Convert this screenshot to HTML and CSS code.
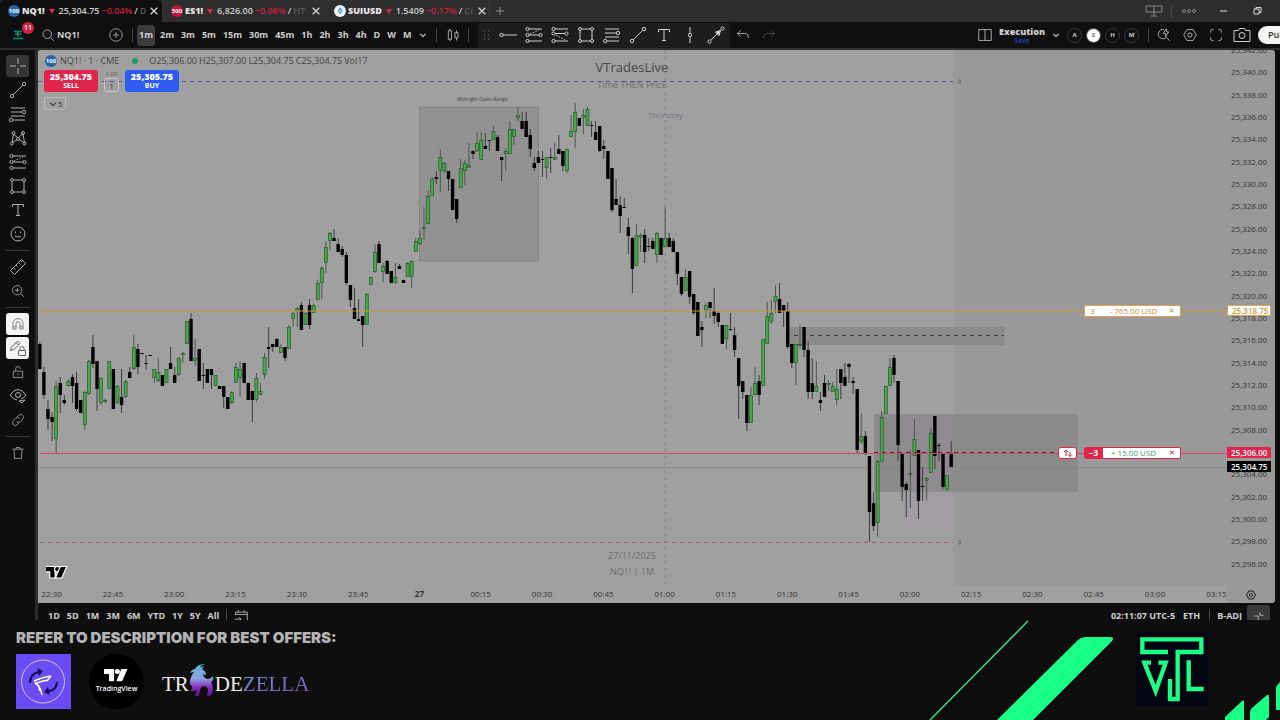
FILE: index.html
```html
<!DOCTYPE html>
<html lang="en">

<head>
	<meta charset="utf-8">
	<title>NQ1! 25,304.75</title>
	<link rel="stylesheet" href="styles.css">
</head>

<body>
	<!-- icon sprites -->
	<svg class="sprites" aria-hidden="true">
		<symbol id="i-cross" viewBox="0 0 18 18"><path d="M9 1v6M9 11v6M1 9h6M11 9h6" /></symbol>
		<symbol id="i-line" viewBox="0 0 18 18"><circle cx="3" cy="15" r="1.7" /><circle cx="15" cy="3" r="1.7" /><path d="M4.3 13.7l9.4-9.4" /></symbol>
		<symbol id="i-fib" viewBox="0 0 18 18"><path d="M2 3h14M2 7h11M2 11h14M4 15h12" /><circle cx="15" cy="7" r="1.7" /><circle cx="2.2" cy="15" r="1.7" /></symbol>
		<symbol id="i-pattern" viewBox="0 0 18 18"><path d="M3 14l1.500-9L9 9l5-4.500L15.500 14 10 10.500M3 14l5-3.500" /><circle cx="2.800" cy="14.500" r="1.500" /><circle cx="4.500" cy="4" r="1.500" /><circle cx="9" cy="10" r="1.500" /><circle cx="14" cy="4" r="1.500" /><circle cx="15.500" cy="14.500" r="1.500" /></symbol>
		<symbol id="i-forecast" viewBox="0 0 18 18"><path d="M4 3h13M4 9h10M4 15h13" /><path d="M5 8l9-4" stroke-dasharray="1.500 1.500" /><circle cx="2.500" cy="3" r="1.600" /><circle cx="2.500" cy="9" r="1.600" /><circle cx="2.500" cy="15" r="1.600" /><circle cx="15.500" cy="9" r="1.600" /></symbol>
		<symbol id="i-short" viewBox="0 0 18 18"><path d="M4 3h13M4 7.500h10M4 15h13" /><path d="M5 9l9 5" stroke-dasharray="1.500 1.500" /><circle cx="2.500" cy="3" r="1.600" /><circle cx="2.500" cy="7.500" r="1.600" /><circle cx="2.500" cy="15" r="1.600" /><circle cx="15.500" cy="7.500" r="1.600" /></symbol>
		<symbol id="i-rect" viewBox="0 0 18 18"><path d="M4.500 3h9M4.500 15h9M3 4.500v9M15 4.500v9" /><circle cx="3" cy="3" r="1.500" /><circle cx="15" cy="3" r="1.500" /><circle cx="3" cy="15" r="1.500" /><circle cx="15" cy="15" r="1.500" /></symbol>
		<symbol id="i-text" viewBox="0 0 18 18"><path d="M3.500 6V3.500h11V6M9 3.500v11M7 14.500h4" /></symbol>
		<symbol id="i-smile" viewBox="0 0 18 18"><circle cx="9" cy="9" r="7" /><path d="M6.500 6.500v1.500M11.500 6.500v1.500M6 11q3 2.500 6 0" /></symbol>
		<symbol id="i-ruler" viewBox="0 0 18 18"><path d="M1.500 12.500l11-11 4 4-11 11zM4.500 9.500l2 2M7 7l1.500 1.500M9.500 4.500l2 2M12 3l1 1" /></symbol>
		<symbol id="i-zoomin" viewBox="0 0 18 18"><circle cx="8" cy="8" r="6" /><path d="M12.500 12.500l4 4M5 8h6M8 5v6" /></symbol>
		<symbol id="i-magnet" viewBox="0 0 18 18"><path d="M2.500 15.500V8.500a6.500 6.500 0 0 1 13 0v7h-4v-7a2.500 2.500 0 0 0-5 0v7zM2.500 12.500h4M11.500 12.500h4" /></symbol>
		<symbol id="i-pencil" viewBox="0 0 18 18"><path d="M1.500 11.500l1-3.500 6-6 2.500 2.500-6 6zM7 3.500l2.500 2.500M9.500 11.500h7v5h-7zM11 11.500V9.500a2 2 0 0 1 4 0v2" /></symbol>
		<symbol id="i-lock" viewBox="0 0 18 18"><path d="M3 8h12v8H3zM6 8V5a3 3 0 0 1 6 0M9 11v2" /></symbol>
		<symbol id="i-eye" viewBox="0 0 18 18"><path d="M1 8q8-11 16 0-2 3-5 4M1 8q3 4.500 7 5M10 14l6-1-3 3z" /><circle cx="9" cy="8" r="2.500" /></symbol>
		<symbol id="i-link" viewBox="0 0 18 18"><path d="M7.500 5.500L10 3a3.500 3.500 0 0 1 5 5l-3 3a3.500 3.500 0 0 1-5 0M10.500 12.500L8 15a3.500 3.500 0 0 1-5-5l3-3a3.500 3.500 0 0 1 5 0" /></symbol>
		<symbol id="i-trash" viewBox="0 0 18 18"><path d="M2 4h14M6.500 4V2h5v2M4 4l.5 12h9L14 4" /></symbol>
		<symbol id="i-hray" viewBox="0 0 18 18"><path d="M4 9h14" /><circle cx="2.500" cy="9" r="1.700" /></symbol>
		<symbol id="i-vline" viewBox="0 0 18 18"><path d="M9 1v6M9 11v6" /><circle cx="9" cy="9" r="1.700" /></symbol>
		<symbol id="i-arrow" viewBox="0 0 18 18"><circle cx="2.500" cy="15.500" r="1.600" /><circle cx="15.500" cy="2.500" r="1.600" /><path d="M4 14l10-10" /><path d="M13.500 4.500l-1.500 5-3.500-3.500z" fill="currentColor" /></symbol>
		<symbol id="i-search" viewBox="0 0 18 18"><circle cx="8" cy="8" r="5.500" /><path d="M12 12l4.500 4.500" /></symbol>
		<symbol id="i-plus" viewBox="0 0 18 18"><circle cx="9" cy="9" r="8" /><path d="M9 5v8M5 9h8" /></symbol>
		<symbol id="i-chev" viewBox="0 0 18 18"><path d="M4 7l5 4.500L14 7" /></symbol>
		<symbol id="i-candles" viewBox="0 0 18 18"><path d="M3 3.500h4v11H3zM5 1v2.500M5 14.500V17M11.500 6h4v6.500h-4zM13.500 3v3M13.500 12.500V16" /></symbol>
		<symbol id="i-undo" viewBox="0 0 18 18"><path d="M6 3L2 7l4 4M2 7h9q5 0 5 6" /></symbol>
		<symbol id="i-redo" viewBox="0 0 18 18"><path d="M12 3l4 4-4 4M16 7H7q-5 0-5 6" /></symbol>
		<symbol id="i-layout" viewBox="0 0 18 18"><path d="M1 2h16v14H1zM9 2v14" /></symbol>
		<symbol id="i-replay" viewBox="0 0 18 18"><path d="M13 11A6 6 0 1 1 9 2M12.500 12.500l4 4M12 1L8 7h3v4l4-6h-3z" /></symbol>
		<symbol id="i-gear" viewBox="0 0 18 18"><path d="M5 2h8l4 7-4 7H5L1 9z" /><circle cx="9" cy="9" r="2.800" /></symbol>
		<symbol id="i-full" viewBox="0 0 18 18"><path d="M2 6V4q0-2 2-2h2M12 2h2q2 0 2 2v2M16 12v2q0 2-2 2h-2M6 16H4q-2 0-2-2v-2" /></symbol>
		<symbol id="i-camera" viewBox="0 0 18 18"><path d="M1 4.500h4.500l1-2h5l1 2H17v11H1z" /><circle cx="9" cy="9.500" r="3" /></symbol>
		<symbol id="i-x" viewBox="0 0 18 18"><path d="M4 4l10 10M14 4L4 14" /></symbol>
		<symbol id="i-calendar" viewBox="0 0 18 18"><path d="M2 8V4h15v12h-4M2 7h15M5.500 4V1.500M13 4V1.500M1 13h8M6.500 10.500L9 13l-2.500 2.500" /></symbol>
		<!-- TradingView mark -->
		<symbol id="tv-mark" viewBox="0 0 36 20"><path d="M0 1h14v17H7V8H0z" /><circle cx="18.500" cy="4.500" r="3.500" /><path d="M24 1h8.500L25 18h-8z" /></symbol>
	</svg>

	<nav class="tabs">
		<div class="tab active">
			<span class="coin blue">100</span><b>NQ1!</b><i class="down"></i><span>25,304.75</span><span class="red">−0.04%</span><span>/</span><span class="faint">D</span>
			<button class="close" aria-label="Close NQ1!"><svg><use href="#i-x" /></svg></button>
		</div>
		<div class="tab">
			<span class="coin crimson">500</span><b>ES1!</b><i class="down"></i><span>6,826.00</span><span class="red">−0.06%</span><span>/</span><span class="faint">HT</span>
			<button class="close" aria-label="Close ES1!"><svg><use href="#i-x" /></svg></button>
		</div>
		<div class="tab">
			<span class="coin white">◊</span><b>SUIUSD</b><i class="down"></i><span>1.5409</span><span class="red">−0.17%</span><span>/</span><span class="faint">Cr</span>
			<button class="close" aria-label="Close SUIUSD"><svg><use href="#i-x" /></svg></button>
		</div>
		<button class="new-tab" aria-label="New tab"><svg viewBox="0 0 10 10"><path d="M5 1v8M1 5h8" /></svg></button>
		<div class="window-buttons">
			<button aria-label="Pin"><svg viewBox="0 0 18 12"><path d="M1 1h16v6H1zM9 1v10M6 11h6" /></svg></button>
			<span class="sep"></span>
			<button aria-label="More"><svg viewBox="0 0 18 12"><circle cx="4" cy="6" r="1.500" /><circle cx="9" cy="6" r="1.500" /><circle cx="14" cy="6" r="1.500" /></svg></button>
			<button aria-label="Minimise" class="bright"><svg viewBox="0 0 18 12"><path d="M6 6h7" /></svg></button>
			<button aria-label="Restore" class="bright"><svg viewBox="0 0 18 12"><path d="M6 4h5v5H6zM8 4V2.500h5v5h-2" /></svg></button>
		</div>
	</nav>

	<header class="toolbar">
		<button class="avatar" aria-label="Account"><svg viewBox="0 0 18 18"><path d="M5 5.500h8M6 8h6M9 5v6M4 12.500h10" stroke-width="1.500" /></svg><span class="badge">11</span></button>
		<button class="symbol"><svg class="icon small"><use href="#i-search" /></svg>NQ1!</button>
		<button class="add" aria-label="Compare"><svg class="icon"><use href="#i-plus" /></svg></button>
		<span class="sep"></span>
		<div class="intervals">
			<button class="on">1m</button>
			<button>2m</button>
			<button>3m</button>
			<button>5m</button>
			<button>15m</button>
			<button>30m</button>
			<button>45m</button>
			<button>1h</button>
			<button>2h</button>
			<button>3h</button>
			<button>4h</button>
			<button>D</button>
			<button>W</button>
			<button>M</button>
			<button aria-label="More intervals"><svg class="icon tiny"><use href="#i-chev" /></svg></button>
		</div>
		<span class="sep"></span>
		<button class="chart-type" aria-label="Chart type"><svg class="icon"><use href="#i-candles" /></svg></button>
		<span class="sep"></span>
		<div class="favorites">
			<svg class="grip" viewBox="0 0 8 12"><path d="M1 2h1M5 2h1M1 6h1M5 6h1M1 10h1M5 10h1" /></svg>
			<button aria-label="Horizontal ray"><svg class="icon"><use href="#i-hray" /></svg></button>
			<button aria-label="Long position"><svg class="icon"><use href="#i-forecast" /></svg></button>
			<button aria-label="Short position"><svg class="icon"><use href="#i-short" /></svg></button>
			<button aria-label="Rectangle"><svg class="icon"><use href="#i-rect" /></svg></button>
			<button aria-label="Fib retracement"><svg class="icon"><use href="#i-fib" /></svg></button>
			<button aria-label="Trend line"><svg class="icon"><use href="#i-line" /></svg></button>
			<button aria-label="Text"><svg class="icon"><use href="#i-text" /></svg></button>
			<button aria-label="Vertical line"><svg class="icon"><use href="#i-vline" /></svg></button>
			<button aria-label="Arrow"><svg class="icon"><use href="#i-arrow" /></svg></button>
		</div>
		<button class="history" aria-label="Undo"><svg class="icon small"><use href="#i-undo" /></svg></button>
		<button class="history off" aria-label="Redo"><svg class="icon small"><use href="#i-redo" /></svg></button>

		<div class="right-tools">
			<button class="tool" aria-label="Layout"><svg class="icon small"><use href="#i-layout" /></svg></button>
			<button class="layout-name"><b>Execution</b><span>Save</span></button>
			<button class="more" aria-label="Layouts"><svg class="icon tiny"><use href="#i-chev" /></svg></button>
			<div class="circles">
				<button>A</button>
				<button class="on">E</button>
				<button>H</button>
				<button>M</button>
			</div>
			<span class="sep"></span>
			<button class="tool" aria-label="Quick search"><svg class="icon small"><use href="#i-replay" /></svg></button>
			<button class="tool" aria-label="Settings"><svg class="icon small"><use href="#i-gear" /></svg></button>
			<button class="tool" aria-label="Fullscreen"><svg class="icon small"><use href="#i-full" /></svg></button>
			<button class="tool" aria-label="Snapshot"><svg class="icon"><use href="#i-camera" /></svg></button>
			<button class="publish">Publish</button>
		</div>
	</header>

	<main class="workspace">
		<aside class="drawing">
			<button class="on" aria-label="Cross"><svg class="icon"><use href="#i-cross" /></svg></button>
			<button aria-label="Trend line"><svg class="icon"><use href="#i-line" /></svg></button>
			<button aria-label="Fib"><svg class="icon"><use href="#i-fib" /></svg></button>
			<button aria-label="Patterns"><svg class="icon"><use href="#i-pattern" /></svg></button>
			<button aria-label="Forecast"><svg class="icon"><use href="#i-forecast" /></svg></button>
			<button aria-label="Shapes"><svg class="icon"><use href="#i-rect" /></svg></button>
			<button aria-label="Text"><svg class="icon"><use href="#i-text" /></svg></button>
			<button aria-label="Emoji"><svg class="icon"><use href="#i-smile" /></svg></button>
			<hr>
			<button aria-label="Measure"><svg class="icon"><use href="#i-ruler" /></svg></button>
			<button aria-label="Zoom in"><svg class="icon small"><use href="#i-zoomin" /></svg></button>
			<hr>
			<button class="lit" aria-label="Magnet"><svg class="icon small"><use href="#i-magnet" /></svg></button>
			<button class="lit" aria-label="Keep drawing"><svg class="icon"><use href="#i-pencil" /></svg></button>
			<button aria-label="Lock"><svg class="icon small"><use href="#i-lock" /></svg></button>
			<button aria-label="Hide"><svg class="icon"><use href="#i-eye" /></svg></button>
			<button aria-label="Sync"><svg class="icon small"><use href="#i-link" /></svg></button>
			<hr>
			<button aria-label="Remove"><svg class="icon small"><use href="#i-trash" /></svg></button>
		</aside>

		<section class="chart">
			<div class="plot">
				<div class="watermark">
					<p class="name">VTradesLive</p>
					<p>Time THEN Price</p>
					<p class="date">27/11/2025</p>
					<p>NQ1! | 1M</p>
				</div>
				<span class="note weekday">Thursday</span>
				<span class="note range-name">Midnight Open Range</span>

				<!-- one unit is one pixel of the 1280 wide layout -->
				<svg class="candles" viewBox="38 50 1188 536" preserveAspectRatio="none">
					<rect class="future" x="953" y="50" width="273" height="536" />
					<rect class="range" x="419.500" y="107" width="119" height="154" />
					<rect class="zone" x="788" y="327" width="216.500" height="18" />
					<rect class="zone" x="874" y="414" width="204" height="78" />
					<rect class="session" x="903" y="414" width="49" height="110" />
					<path class="day" d="M665 50V586" />
					<path class="hi" d="M38 81.500H953" />
					<path class="lo" d="M40 542.500H953" />
					<rect class="mark" x="958.500" y="80" width="2" height="3" />
					<rect class="mark" x="958.500" y="541" width="2" height="3" />
					<path class="mid" d="M786 335.500H1004" />
					<path class="last" d="M38 467.500H1226" />
					<g id="candles"></g>
					<path class="target" d="M40 311H1226" />
					<path class="mid" d="M874 452.500H1058" />
					<path class="entry" d="M40 453.500H1226" />
				</svg>

				<div class="legend">
					<span class="coin blue">100</span>
					<span class="title">NQ1! · 1 · CME</span>
					<i class="open"></i>
					<span>O25,306.00</span><span>H25,307.00</span><span>L25,304.75</span><span>C25,304.75</span><span>Vol17</span>
				</div>
				<div class="trade">
					<button class="sell"><b>25,304.75</b>SELL</button>
					<label class="qty">1.00<input type="text" value="1"></label>
					<button class="buy"><b>25,305.75</b>BUY</button>
				</div>
				<button class="collapse"><svg class="icon tiny"><use href="#i-chev" /></svg>5</button>

				<div class="order limit">
					<span class="size">3</span><span class="pnl">- 765.00 USD</span><button aria-label="Cancel order">✕</button>
				</div>
				<button class="reverse" aria-label="Reverse"><svg viewBox="0 0 10 10"><path d="M1 4l2-2 2 2M3 2v6M5 6.500l2 2 2-2M7 8.500V4" /></svg></button>
				<div class="order position">
					<span class="size">−3</span><span class="pnl">+ 15.00 USD</span><button aria-label="Close position">✕</button>
				</div>
				<svg class="tv-logo"><use href="#tv-mark" /></svg>
			</div>

			<div class="prices">
				<div class="scale" id="prices"></div>
				<span class="tag orange">25,318.75</span>
				<span class="tag pink">25,306.00</span>
				<span class="tag black">25,304.75</span>
			</div>
			<div class="times">
				<div class="scale" id="times"></div>
			</div>
			<button class="axis-settings" aria-label="Axis settings"><svg class="icon tiny"><use href="#i-gear" /></svg></button>
		</section>
	</main>

	<div class="ranges">
		<div class="inner">
			<button>1D</button>
			<button>5D</button>
			<button>1M</button>
			<button>3M</button>
			<button>6M</button>
			<button>YTD</button>
			<button>1Y</button>
			<button>5Y</button>
			<button>All</button>
			<span class="sep"></span>
			<button aria-label="Go to date"><svg class="icon small"><use href="#i-calendar" /></svg></button>
			<button class="clock">02:11:07 UTC-5</button>
			<button class="eth">ETH</button>
			<span class="sep"></span>
			<button>B-ADJ</button>
			<button class="shrink" aria-label="Restore chart"><svg viewBox="0 0 18 18"><path d="M3 9h5v5M10 4v4h5" /></svg></button>
		</div>
	</div>

	<footer class="banner">
		<h2>REFER TO DESCRIPTION FOR BEST OFFERS:</h2>
		<div class="logos">
			<a href="#" class="square" aria-label="Partner">
				<svg viewBox="0 0 55 55">
					<circle cx="27" cy="27.500" r="21.500" fill="none" stroke="#cfc8ff" />
					<path d="M13 29q0-10 9-12l-1-3 6 3-4 5-1-3q-6 2-7 10zM42 28q0 9-9 10l1 3-6-3 4-5 1 3q6-1 7-8z" fill="#15105e" />
					<path d="M18 27q9-4 17-5M19 30q6-3 13-4M22 31q3 4 4 10M19 28q4 4 5 9M35 22l-4 5" fill="none" stroke="#fff" stroke-width="1.500" />
				</svg>
			</a>
			<a href="#" class="round"><svg><use href="#tv-mark" /></svg>TradingView</a>
			<a href="#" class="zella">
				<span>TR</span>
				<svg viewBox="0 0 26 34">
					<defs>
						<linearGradient id="mane" x1="0" y1="0" x2="0" y2="1">
							<stop offset="0" stop-color="#58b4dc" />
							<stop offset=".45" stop-color="#8fa3e0" />
							<stop offset=".7" stop-color="#8a35c4" />
							<stop offset="1" stop-color="#5a1290" />
						</linearGradient>
					</defs>
					<path fill="url(#mane)" d="M6 6q2-5 11-5-5 1-6 3 3-1 5 0-3 0-3 2 4 2 4 6-2 0-3-1 0 3 4 5 4 0 6-3 1 4-2 6 3 5 1 12l-2 2h-3l1-6q-1-4-4-4-3 0-4 4l-1 6H6l2-6q-4 2-7 1 3-2 2-5-3-1-2-6 2-6 4-8-2 0-4 1 2-4 5-4z" />
				</svg>
				<span>DE</span><span class="fade">ZELLA</span>
			</a>
		</div>
		<svg class="stripes" viewBox="0 0 360 100">
			<path d="M108 1L10 100" stroke="#3fd582" stroke-width="1.500" />
			<path d="M77 100L155 23Q160 17 166 17H190Q195 17 192 21L113 100z" fill="#1aff85" />
			<path d="M305 100V97L322 81Q324 79 324 82V100z" fill="#1aff85" />
			<path d="M330 100V92Q330 90 332 88L347 75Q349 74 349 77V97L346 100z" fill="#1aff85" />
			<path d="M356 90V67L360 62V90z" fill="#1aff85" />
		</svg>
		<svg class="vtl" viewBox="708 95 216 222">
			<rect x="708" y="95" width="216" height="222" fill="#020512" stroke="none" />
			<path d="M804 155H727V117H904V155H833V296H810V236M753 187H733L767 272L797 187H775M866 180V266H911" />
		</svg>
	</footer>

	<script src="chart.js"></script>
</body>

</html>
```
FILE: styles.css
```css
* {
	box-sizing: border-box;
}

body {
	margin: 0;
	min-height: 100vh;
	display: flex;
	flex-direction: column;
	background: #0e0e0e;
	color: #d0d0d0;
	font: 9px/12px "Open Sans", "Noto Sans", sans-serif;
	overflow-x: hidden;
}

button {
	font: inherit;
	color: inherit;
	background: none;
	border: 0;
	padding: 0;
	display: flex;
	align-items: center;
	justify-content: center;
	cursor: pointer;
}

svg {
	fill: none;
	stroke: currentColor;
	display: block;
}

a {
	color: inherit;
	text-decoration: none;
}

.sprites {
	position: absolute;
	width: 0;
	height: 0;
}

.icon {
	width: 18px;
	height: 18px;
}

.icon.small {
	width: 14px;
	height: 14px;
}

.icon.tiny {
	width: 10px;
	height: 10px;
	stroke-width: 2;
}

.sep {
	width: 1px;
	height: 14px;
	background: #444;
	flex: none;
}

/* tabs */

.tabs {
	height: 22px;
	display: flex;
	align-items: center;
	background: #2e2e2e;
	font-weight: 600;
}

.tab {
	width: 163px;
	height: 22px;
	padding: 0 3px 0 8px;
	display: flex;
	align-items: center;
	gap: 2px;
	white-space: nowrap;
	border-right: 1px solid #333;
}

.tab.active {
	background: #0f0f0f;
	border-radius: 4px 4px 0 0;
}

.tab b {
	color: #e6e6e6;
}

.coin {
	width: 12px;
	height: 12px;
	border-radius: 6px;
	color: #fff;
	font-size: 6px;
	font-weight: 700;
	text-align: center;
	flex: none;
}

.blue {
	background: #2565a5;
}

.crimson {
	background: #c41442;
}

.white {
	background: #e8f2f8;
	color: #3b8ab4;
	font-size: 9px;
}

.down {
	border: 3px solid transparent;
	border-top: 5px solid #e0254a;
	border-bottom: 0;
	margin: 0 2px;
}

.red {
	color: #c8203f;
}

.faint {
	color: #5a5a5a;
	flex: 1;
}

.close svg {
	width: 12px;
	height: 12px;
	stroke-width: 2;
}

.new-tab {
	width: 22px;
	color: #888;
}

.new-tab svg {
	width: 10px;
	height: 10px;
}

.window-buttons {
	margin-left: auto;
	padding-right: 6px;
	display: flex;
	align-items: center;
	color: #888;
}

.window-buttons button {
	width: 34px;
}

.window-buttons svg {
	width: 18px;
	height: 12px;
}

.bright {
	color: #ddd;
}

/* top toolbar */

.toolbar {
	height: 28px;
	display: flex;
	align-items: center;
	background: #0f0f0f;
	border-bottom: 2px solid #2e2e2e;
	font-weight: 600;
	overflow: hidden;
}

.avatar {
	position: relative;
	width: 36px;
}

.avatar > svg {
	width: 18px;
	height: 18px;
	border-radius: 9px;
	background: #06101a;
	color: #1f8a5a;
}

.badge {
	position: absolute;
	right: 2px;
	top: -4px;
	width: 12px;
	height: 12px;
	border-radius: 6px;
	background: #d5213f;
	color: #fff;
	font-size: 7px;
}

.symbol {
	width: 68px;
	padding-left: 5px;
	justify-content: flex-start;
	gap: 2px;
	font-weight: 700;
}

.add {
	width: 24px;
	color: #bbb;
}

.add .icon {
	width: 14px;
	height: 14px;
}

.add + .sep {
	margin: 0 4px;
}

.intervals {
	display: flex;
	gap: 3px;
	margin-right: 6px;
	font-weight: 700;
}

.intervals button {
	height: 21px;
	padding: 0 2px;
	border-radius: 3px;
}

.intervals .on {
	background: #3c3c3c;
}

.chart-type {
	width: 31px;
}

.chart-type .icon {
	width: 14px;
	height: 14px;
}

.favorites {
	height: 25px;
	margin-left: 9px;
	padding: 0 1px 0 5px;
	display: flex;
	align-items: center;
	gap: 0;
	background: #1d1d1d;
	border-radius: 3px;
}

.favorites button {
	width: 26px;
}

.grip {
	width: 8px;
	height: 12px;
	margin-right: 4px;
	color: #777;
}

.history {
	width: 26px;
}

.off {
	color: #555;
}

.right-tools {
	margin: 0 -30px 0 auto;
	display: flex;
	align-items: center;
}

.tool {
	width: 26px;
}

.layout-name {
	flex-direction: column;
	margin-left: 1px;
	line-height: 10px;
}

.layout-name span {
	font-size: 7px;
	line-height: 7px;
	color: #2b41c8;
}

.more {
	width: 22px;
}

.circles {
	display: flex;
	gap: 4px;
	margin: 0 9px 0 0;
}

.circles button {
	width: 15px;
	height: 15px;
	border: 1px solid #3a3a3a;
	border-radius: 8px;
	font-size: 6px;
	font-weight: 700;
}

.circles .on {
	background: #fff;
	color: #777;
}

.circles + .sep {
	margin-right: 2px;
}

.publish {
	width: 52px;
	height: 18px;
	margin-left: 3px;
	border-radius: 9px;
	background: #f5f5f5;
	color: #333;
}

/* left toolbar + chart */

.workspace {
	flex: 1;
	display: grid;
	grid-template-columns: 38px 1fr;
	padding-right: 5px;
}

.drawing {
	border-right: 3px solid #2c2c2c;
	padding: 4px 0;
	display: flex;
	flex-direction: column;
	align-items: center;
	color: #b0b0b0;
}

.drawing button {
	width: 23px;
	height: 22px;
	margin: 1px 0;
	border-radius: 3px;
}

.drawing .on {
	background: #353535;
}

.drawing .lit {
	background: #f2f2f2;
	color: #666;
}

.drawing hr {
	width: 24px;
	height: 1px;
	margin: 4px 0;
	border: 0;
	background: #3a3a3a;
}

.chart {
	display: grid;
	grid-template-columns: 1fr 49px;
	grid-template-rows: 1fr 17px;
	background: #999;
	color: #333;
	font-size: 8px;
	border-radius: 3px 3px 3px 0;
	overflow: hidden;
}

.plot {
	position: relative;
	background: #a0a0a0;
}

.candles {
	position: absolute;
	left: 0;
	top: 0;
	width: 100%;
	height: 100%;
	stroke: none;
}

.future {
	fill: #999;
}

.range {
	fill: #929292;
	stroke: #6e6e6e;
	stroke-dasharray: 1 1;
}

.zone {
	fill: #8b8b8b;
}

.session {
	fill: #b090b8;
	opacity: .15;
}

.day {
	stroke: #838383;
	stroke-dasharray: 3 4;
}

.hi {
	stroke: #4c5298;
	stroke-dasharray: 4 4;
}

.lo {
	stroke: #94606a;
	stroke-dasharray: 4 4;
}

.mark {
	stroke: #777;
}

.mid {
	stroke: #383838;
	stroke-dasharray: 4 4;
}

.last {
	stroke: #7c7c7c;
	stroke-dasharray: 1 1;
}

.target {
	stroke: #c8963c;
}

.entry {
	stroke: #e0405e;
}

.wick {
	stroke: #3c3c3c;
}

.wick.up {
	stroke: #4c584c;
}

.body {
	fill: #000;
}

.body.up {
	fill: #48a84c;
	stroke: #245a27;
	stroke-width: .7;
}

.watermark {
	position: absolute;
	inset: 8px 0 6px;
	display: flex;
	flex-direction: column;
	align-items: center;
	font-size: 9px;
	line-height: 16px;
	color: #707070;
}

.watermark p {
	margin: 0;
}

.watermark .name {
	font-size: 13px;
	line-height: 19px;
	color: #484848;
}

.watermark .date {
	margin-top: auto;
}

.note {
	position: absolute;
	color: #747780;
}

.weekday {
	left: 610px;
	top: 59px;
	font-size: 8px;
}

.range-name {
	left: 419px;
	top: 43px;
	font-size: 5px;
	color: #444;
}

.legend {
	position: absolute;
	left: 7px;
	top: 5px;
	display: flex;
	align-items: center;
	gap: 2px;
	font-size: 9px;
	color: #444;
}

.legend .title {
	margin: 0 4px 0 1px;
}

.legend .open {
	width: 6px;
	height: 6px;
	margin: 0 9px 0 7px;
	border-radius: 3px;
	background: #1f9a68;
}

.trade {
	position: absolute;
	left: 6px;
	top: 20px;
	display: flex;
	gap: 6px;
}

.sell,
.buy {
	width: 54px;
	height: 22px;
	flex-direction: column;
	border-radius: 3px;
	background: #e0254c;
	color: #fff;
	font-size: 7px;
	font-weight: 700;
	line-height: 8px;
}

.buy {
	background: #2e5cf0;
}

.sell b,
.buy b {
	font-size: 9px;
	line-height: 10px;
}

.qty {
	width: 15px;
	font-size: 6px;
	line-height: 8px;
	text-align: center;
	color: #555;
}

.qty input {
	width: 15px;
	height: 14px;
	padding: 0;
	display: block;
	border: 1px solid #c8c8c8;
	border-radius: 3px;
	background: none;
	font: inherit;
	font-size: 8px;
	text-align: center;
	color: #444;
}

.collapse {
	position: absolute;
	left: 6px;
	top: 47px;
	width: 22px;
	height: 13px;
	border: 1px solid #bdbdbd;
	border-radius: 2px;
}

.order {
	position: absolute;
	right: 45px;
	width: 97px;
	height: 12px;
	display: flex;
	align-items: center;
	background: #fff;
	border: 1px solid #e0a050;
	border-radius: 2px;
	color: #c98a3c;
	line-height: 10px;
}

.limit {
	top: 255px;
}

.position {
	top: 397px;
	border-color: #e0254c;
	color: #3f9a72;
}

.size {
	width: 18px;
	padding-left: 5px;
}

.position .size {
	padding-left: 4px;
	background: #e0254c;
	color: #fff;
	font-weight: 700;
}

.pnl {
	flex: 1;
	text-align: center;
}

.order button {
	width: 16px;
	font-size: 7px;
}

.position button,
.reverse {
	color: #c02848;
}

.reverse {
	position: absolute;
	right: 149px;
	top: 397px;
	width: 19px;
	height: 12px;
	background: #fff;
	border: 1px solid #e0254c;
	border-radius: 3px;
}

.reverse svg {
	width: 10px;
	height: 10px;
}

.tv-logo {
	position: absolute;
	left: 8px;
	bottom: 7px;
	width: 22px;
	height: 13px;
	overflow: visible;
	fill: #000;
	stroke: #fff;
	stroke-width: 4;
	paint-order: stroke;
}

.prices {
	position: relative;
	overflow: hidden;
}

.prices .scale {
	height: 100%;
	margin-top: -11px;
	display: grid;
	grid-auto-rows: 1fr;
	align-items: center;
	padding-left: 5px;
}

.tag {
	position: absolute;
	left: 1px;
	width: 44px;
	height: 11px;
	padding-left: 4px;
	line-height: 11px;
	font-weight: 600;
	color: #fff;
}

.orange {
	top: 255px;
	background: #fff;
	border: 1px solid #e0a050;
	line-height: 9px;
	color: #d8983f;
}

.pink {
	top: 397px;
	background: #e0254c;
}

.black {
	top: 411px;
	background: #000;
}

.times {
	background: #a0a0a0;
	overflow: hidden;
}

.times .scale {
	margin: 0 -21px 0 -17px;
	display: grid;
	grid-auto-flow: column;
	grid-auto-columns: 1fr;
	text-align: center;
	line-height: 16px;
}

/* bottom range bar, cut off by the banner */

.ranges {
	height: 17px;
	margin-left: 35px;
	border-left: 3px solid #2c2c2c;
	overflow: hidden;
	font-weight: 700;
}

.ranges .inner {
	height: 26px;
	padding: 0 10px 0 10px;
	display: flex;
	align-items: center;
	gap: 7px;
}

.clock {
	margin-left: auto;
}

.eth {
	margin: 0 2px 0 1px;
}

.shrink {
	width: 23px;
	height: 22px;
	margin-left: -2px;
	border-radius: 3px;
	background: #3a3a3a;
}

.shrink svg {
	width: 14px;
	height: 14px;
}

/* sponsor banner */

.banner {
	position: relative;
	height: 100px;
	padding: 9px 16px;
	background: #0e0e0e;
}

.banner h2 {
	margin: 0 0 8px;
	font: 900 15px/17px Inter, sans-serif;
	color: #b4b4b4;
}

.logos {
	display: flex;
	align-items: center;
	gap: 18px;
}

.square {
	width: 55px;
	height: 55px;
	background: #6a4cf5;
}

.square svg {
	stroke: none;
}

.round {
	width: 55px;
	height: 55px;
	border-radius: 28px;
	display: flex;
	flex-direction: column;
	align-items: center;
	justify-content: center;
	background: #000;
	color: #fff;
	font-size: 7px;
	font-weight: 600;
}

.round svg {
	width: 26px;
	height: 15px;
	fill: #fff;
	stroke: none;
}

.zella {
	padding-top: 6px;
	display: flex;
	align-items: center;
	font: 21px/49px "Liberation Serif", serif;
	color: #eee;
}

.zella svg {
	width: 26px;
	height: 34px;
	margin-bottom: 10px;
	stroke: none;
}

.fade {
	background: linear-gradient(165deg, #58b8e0, #7a6cc8 55%, #a030c0);
	background-clip: text;
	color: transparent;
}

.stripes {
	position: absolute;
	right: 0;
	top: 0;
	width: 360px;
	height: 100px;
	stroke: none;
}

.vtl {
	position: absolute;
	right: 72px;
	top: 12px;
	width: 72px;
	height: 74px;
	stroke: #1aff85;
	stroke-width: 13;
}
```
FILE: chart.js
```js
// [high, body top, body bottom, low, up] for every minute from 22:27
const bars = [
	[342,344,369,369,0],[367,372,395,399,0],[400,409,419,430,0],[412,417,422,441,0],[381,386,439,453,1],
	[377,383,395,413,0],[395,400,403,405,0],[379,381,386,387,1],[374,377,386,403,0],[372,383,409,411,0],
	[400,400,413,413,0],[391,392,425,430,1],[360,361,394,395,1],[335,347,364,368,0],[361,361,389,411,0],
	[377,378,403,405,1],[399,400,401,403,1],[361,361,389,389,1],[369,369,409,409,0],[385,386,403,404,1],
	[369,397,405,413,0],[380,381,397,398,1],[367,372,378,378,0],[335,347,369,370,1],[344,349,367,374,0],
	[353,353,354,354,0],[355,363,364,370,0],[355,355,356,356,0],[369,369,378,383,1],[358,372,381,382,1],
	[375,375,386,386,0],[369,369,383,383,1],[347,363,369,369,0],[367,375,383,383,0],[357,358,375,376,1],
	[352,353,355,363,1],[321,321,344,344,1],[313,319,361,361,0],[339,358,361,366,1],[349,349,381,381,0],
	[363,375,375,389,0],[369,369,383,383,0],[369,369,375,389,0],[375,375,386,386,1],[386,386,389,389,0],
	[386,386,397,408,0],[397,397,409,409,0],[391,392,403,404,1],[363,367,383,383,1],[361,369,378,397,1],
	[363,363,383,383,0],[383,383,400,400,0],[391,391,400,422,0],[373,378,400,402,1],[383,391,395,395,1],
	[353,357,375,379,1],[327,347,349,368,0],[344,344,347,352,0],[338,339,347,347,0],[344,347,353,353,1],
	[347,347,358,361,0],[325,327,349,349,1],[312,313,319,327,1],[307,308,311,327,1],[302,305,330,330,0],
	[312,313,325,325,1],[299,305,325,329,0],[304,305,313,313,1],[280,283,300,300,1],[266,268,283,299,1],
	[241,247,263,273,1],[232,233,241,251,1],[229,238,241,241,0],[238,244,252,252,0],[246,249,255,257,0],
	[252,255,283,285,0],[285,285,300,307,0],[288,308,319,319,0],[299,319,321,321,0],[316,316,325,347,0],
	[293,294,325,325,1],[277,277,285,285,1],[244,252,272,273,1],[241,244,263,263,0],[263,266,272,282,1],
	[260,261,274,274,0],[271,271,283,283,0],[263,277,283,284,1],[264,266,269,269,0],[280,280,283,283,0],
	[262,263,277,277,1],[260,261,277,288,1],[238,241,252,252,1],[231,238,244,245,1],[207,227,229,240,1],
	[191,196,224,224,1],[177,179,196,196,1],[171,177,179,184,0],[149,157,171,192,1],[162,163,171,173,1],
	[171,171,179,191,0],[179,179,210,210,0],[199,199,219,223,0],[159,168,188,188,1],[160,163,171,185,1],
	[143,165,168,168,1],[150,151,154,159,0],[132,143,151,152,1],[132,140,160,160,1],[133,146,149,149,0],
	[140,140,141,151,0],[126,131,140,140,1],[135,137,151,151,0],[157,157,160,181,0],[148,151,154,171,1],
	[121,129,154,154,1],[129,129,137,145,1],[107,115,118,121,1],[112,121,129,129,0],[112,121,137,137,0],
	[129,135,149,157,0],[157,163,168,171,0],[151,157,163,163,0],[151,159,160,177,0],[157,157,168,179,1],
	[148,157,158,173,0],[143,157,160,160,1],[135,149,154,154,0],[151,151,166,171,0],[149,149,171,173,1],
	[115,131,137,137,1],[103,112,132,148,1],[118,118,126,126,0],[109,115,118,134,1],[107,109,126,126,1],
	[121,125,126,137,0],[121,132,140,140,0],[126,126,151,152,0],[140,146,149,159,0],[151,151,179,179,0],
	[168,168,210,212,0],[179,199,205,205,0],[196,205,216,233,0],[198,207,208,208,0],[218,227,236,254,0],
	[237,238,269,293,0],[224,235,266,266,1],[233,235,238,252,1],[229,235,252,263,0],[238,246,247,251,0],
	[238,241,249,249,0],[232,233,255,263,1],[238,238,255,255,0],[207,238,247,247,1],[233,238,247,247,0],
	[238,241,252,252,0],[252,252,274,285,0],[277,277,294,296,0],[269,277,291,291,1],[271,271,297,304,0],
	[294,294,313,315,0],[302,302,336,336,0],[321,327,330,347,0],[303,305,311,318,1],[302,302,308,318,0],
	[288,311,316,324,0],[311,313,322,327,0],[325,325,344,344,0],[325,325,339,349,1],[313,329,330,331,0],
	[327,335,350,357,0],[358,358,386,419,0],[381,381,392,399,0],[395,395,423,431,0],[387,395,423,423,1],
	[367,383,395,395,1],[375,381,395,405,0],[339,339,386,386,1],[302,316,344,344,1],[300,313,322,324,1],
	[285,296,302,313,1],[283,299,313,313,0],[305,305,311,327,0],[302,311,347,349,0],[344,344,363,368,0],
	[344,344,363,385,1],[325,344,346,349,1],[327,327,350,357,0],[341,350,392,399,0],[358,383,392,399,0],
	[361,386,392,392,1],[392,400,403,411,0],[375,383,397,397,0],[380,383,385,391,1],[382,386,392,392,1],
	[369,389,400,405,1],[369,369,383,399,0],[363,377,386,386,0],[363,364,367,383,0],[377,381,383,394,0],
	[389,389,450,453,0],[413,436,442,444,1],[431,436,453,455,0],[456,456,512,542,0],[492,503,526,531,0],
	[460,461,523,537,1],[411,417,462,462,1],[386,386,414,414,1],[358,367,386,386,1],[355,358,375,383,0],
	[381,381,445,461,0],[454,454,487,501,0],[482,484,490,517,0],[450,473,475,508,1],[419,439,456,456,1],
	[450,450,501,519,0],[467,486,487,501,0],[477,478,481,500,1],[428,433,473,473,1],[416,416,456,469,0],
	[443,445,446,461,0],[454,454,487,489,0],[475,475,490,490,1],[441,454,467,467,0]
];

const firstX = 39.8;
const step = 4.087;

function drawCandles() {
	let out = "";
	bars.forEach(([high, top, bottom, low, up], i) => {
		const x = firstX + i * step;
		const cls = up ? " up" : "";
		out += `<path class="wick${cls}" d="M${x} ${high}V${low}"/>`;
		if (up) {
			out += `<rect class="body up" x="${x - 1.5}" y="${top + 0.5}" width="3" height="${Math.max(bottom - top - 1, 1)}"/>`;
		} else {
			out += `<rect class="body" x="${x - 1.7}" y="${top}" width="3.4" height="${Math.max(bottom - top, 1)}"/>`;
		}
	});
	document.getElementById("candles").innerHTML = out;
}

function drawScales() {
	let prices = "";
	for (let p = 25342; p >= 25296; p -= 2) {
		prices += `<span>${p.toLocaleString("en-US")}.00</span>`;
	}
	document.getElementById("prices").innerHTML = prices;

	let times = "";
	for (let m = 22 * 60 + 30; m <= 27 * 60 + 15; m += 15) {
		const hour = String(Math.floor(m / 60) % 24).padStart(2, "0");
		const minute = String(m % 60).padStart(2, "0");
		times += m === 1440 ? "<b>27</b>" : `<span>${hour}:${minute}</span>`;
	}
	document.getElementById("times").innerHTML = times;
}

drawCandles();
drawScales();
```
